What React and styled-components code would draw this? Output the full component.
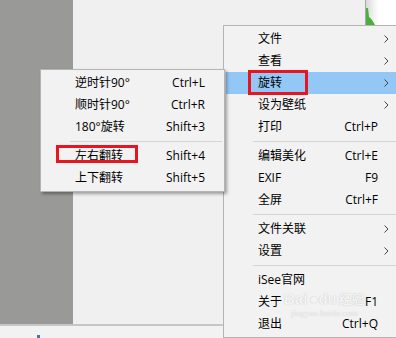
import React from "react";
import styled, { createGlobalStyle } from "styled-components";

const Global = createGlobalStyle`
  html, body { margin: 0; padding: 0; overflow: hidden; background: #f0f0f0; }
  * { box-sizing: border-box; }
`;

const Screen = styled.div`
  position: relative;
  width: 396px;
  height: 338px;
  overflow: hidden;
  display: flex;
  flex-direction: column;
  background: #f0f0f0;
  font-family: "Open Sans", "Noto Sans CJK SC", sans-serif;
  font-size: 12px;
  color: #000;
`;

const Body = styled.div`
  display: flex;
  height: 324px;
`;

const Sidebar = styled.div`
  width: 73px;
  background: #999997;
`;

const Canvas = styled.div`
  flex: 1;
  display: flex;
  justify-content: flex-end;
  background: #f0f0f0;
`;

const Thumb = styled.div`
  width: 31px;
  border-left: 1px solid #a9a9a9;
  background: linear-gradient(to right, #d9d9d9, #ffffff 40%);
`;

const StatusBar = styled.div`
  height: 14px;
  border-top: 2px solid #c6c6c6;
  background: #f2f2f2;
  padding-left: 36px;
  display: flex;
  align-items: flex-end;
`;

const Menu = styled.div`
  position: absolute;
  left: ${(p) => p.$x}px;
  top: ${(p) => p.$y}px;
  width: ${(p) => p.$w}px;
  padding: 2px;
  background: #f2f2f2;
  border: 1px solid #b4b4b4;
  box-shadow: ${(p) => (p.$shadow ? "2px 2px 3px rgba(0,0,0,0.35)" : "none")};
`;

const Item = styled.div`
  display: flex;
  align-items: center;
  height: 22px;
  line-height: 22px;
  padding-left: 32px;
  background: ${(p) => (p.$active ? "#93c7f5" : "transparent")};
  white-space: nowrap;
`;

const Label = styled.span`
  flex: 1;
`;

const Key = styled.span`
  text-align: right;
`;

const Tail = styled.span`
  width: ${(p) => p.$w}px;
  display: flex;
  align-items: center;
  padding-left: 6px;
`;

const Sep = styled.div`
  height: 7px;
  display: flex;
  align-items: center;
  padding-left: 27px;

  &::after {
    content: "";
    flex: 1;
    height: 1px;
    background: #d5d5d5;
  }
`;

const Mark = styled.div`
  position: absolute;
  left: ${(p) => p.$x}px;
  top: ${(p) => p.$y}px;
  width: ${(p) => p.$w}px;
  height: ${(p) => p.$h}px;
  border: 3px solid #e8141f;
`;

const Watermark = styled.div`
  position: absolute;
  left: 284px;
  top: 289px;
  display: flex;
  flex-direction: column;
  align-items: center;
  color: rgba(255, 255, 255, 0.85);
  text-shadow: 0 0 1px rgba(120, 120, 120, 0.5);
  pointer-events: none;
`;

const MarkRow = styled.div`
  display: flex;
  align-items: center;
  gap: 2px;
  font-family: "Liberation Sans", Arial, sans-serif;
  font-size: 15px;
  font-weight: bold;
  line-height: 19px;
`;

const MarkCjk = styled.span`
  font-family: "Noto Sans CJK SC", sans-serif;
  font-size: 13px;
`;

const MarkSub = styled.div`
  font-family: "Liberation Serif", serif;
  font-size: 9px;
  line-height: 10px;
  color: rgba(255, 255, 255, 0.7);
  text-shadow: 0 0 1px rgba(120, 120, 120, 0.4);
`;

const Arrow = () => (
  <svg width="5" height="8" viewBox="0 0 5 8">
    <path d="M0.5 0.5 L4 4 L0.5 7.5" fill="none" stroke="#444" strokeWidth="1" />
  </svg>
);

const mainItems = [
  { label: "文件", arrow: true },
  { label: "查看", arrow: true },
  { label: "旋转", arrow: true, active: true },
  { label: "设为壁纸", arrow: true },
  { label: "打印", key: "Ctrl+P" },
  "sep",
  { label: "编辑美化", key: "Ctrl+E" },
  { label: "EXIF", key: "F9" },
  { label: "全屏", key: "Ctrl+F" },
  "sep",
  { label: "文件关联", arrow: true },
  { label: "设置", arrow: true },
  "sep",
  { label: "iSee官网" },
  { label: "关于", key: "F1" },
  { label: "退出", key: "Ctrl+Q" },
];

const subItems = [
  { label: "逆时针90°", key: "Ctrl+L" },
  { label: "顺时针90°", key: "Ctrl+R" },
  { label: "180°旋转", key: "Shift+3" },
  "sep",
  { label: "左右翻转", key: "Shift+4" },
  { label: "上下翻转", key: "Shift+5" },
];

const MenuList = ({ items, tail }) =>
  items.map((it, i) =>
    it === "sep" ? (
      <Sep key={i} />
    ) : (
      <Item key={i} $active={it.active}>
        <Label>{it.label}</Label>
        {it.key && <Key>{it.key}</Key>}
        <Tail $w={tail}>{it.arrow && <Arrow />}</Tail>
      </Item>
    )
  );

export default function App() {
  return (
    <Screen>
      <Global />
      <Body>
        <Sidebar />
        <Canvas>
          <Thumb>
            <svg width="12" height="25" viewBox="0 0 12 25">
              <path d="M0 8 L2 8 L3 17 Q6 19 9 25 L0 25 Z" fill="#4caf3c" />
            </svg>
          </Thumb>
        </Canvas>
      </Body>
      <StatusBar>
        <svg width="5" height="3" viewBox="0 0 5 3">
          <rect x="1" y="0" width="3" height="3" fill="#3a78b8" />
        </svg>
      </StatusBar>

      <Menu $x={223} $y={25} $w={184}>
        <MenuList items={mainItems} tail={26} />
      </Menu>

      <Menu $x={40} $y={69} $w={185} $shadow>
        <MenuList items={subItems} tail={17} />
      </Menu>

      <Mark $x={248} $y={70} $w={60} $h={25} />
      <Mark $x={56} $y={145} $w={82} $h={18} />

      <Watermark>
        <MarkRow>
          <span>Bai</span>
          <span>●du</span>
          <MarkCjk>经验</MarkCjk>
        </MarkRow>
        <MarkSub>jingyan.baidu.com</MarkSub>
      </Watermark>
    </Screen>
  );
}
